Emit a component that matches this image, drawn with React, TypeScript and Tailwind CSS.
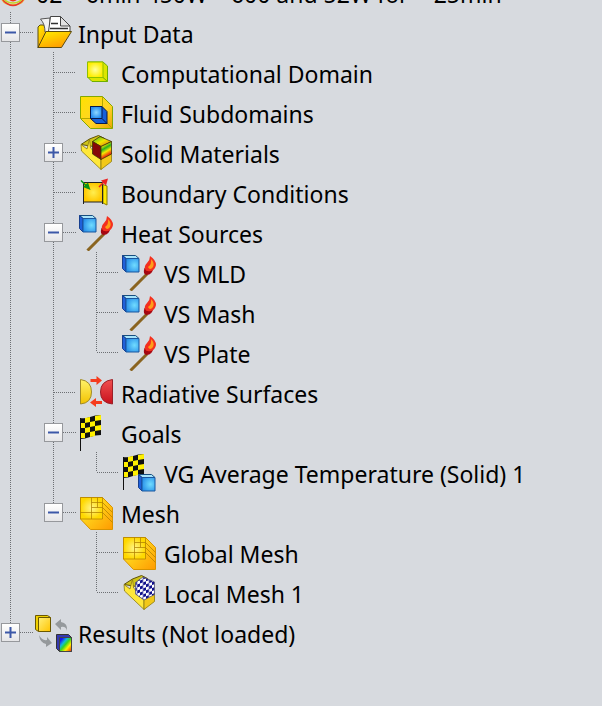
import { useState, type ReactNode } from "react";

type TreeNode = {
  id: string;
  label: string;
  icon: ReactNode;
  children?: TreeNode[];
  collapsed?: boolean;
};

function ProjectIcon() {
  return (
    <svg viewBox="4 0 36 40" className="h-10 w-9 shrink-0" aria-hidden="true">
      <path d="M4 20Q5 33 17 33T30 20" fill="none" stroke="#f0a02c" strokeWidth="1.5" />
      <path d="M7 28Q12 33.5 17 33.5T27 28" fill="none" stroke="#e8352c" strokeWidth="1.5" />
      <path d="M5 23Q9 31 17 31T29 23" fill="none" stroke="#c4d52b" strokeWidth="1.5" />
      <circle cx="17" cy="24" r="5.5" fill="#ef3a1c" />
    </svg>
  );
}

function FolderIcon() {
  return (
    <svg viewBox="0 0 36 36" className="size-9" aria-hidden="true">
      <defs>
        <linearGradient id="folder" x1="0" y1="0" x2="0.6" y2="1">
          <stop offset="0" stopColor="#fff200" />
          <stop offset="1" stopColor="#ff9d00" />
        </linearGradient>
      </defs>
      <path d="M2 33V12l2-2h4l3 4v8" fill="url(#folder)" stroke="#5b4a10" />
      <path d="M4.5 4L14 3v14H9q0-8-4.5-13z" fill="#f2f2f2" stroke="#555" />
      <path d="M14.5 1.5h10L34 11v5.5H12.5z" fill="#fff" stroke="#444" />
      <path d="M24.5 1.5V11H34z" fill="#e2e2e2" stroke="#444" />
      <path d="M15 8.5h7M14 13.5h18" stroke="#333" strokeWidth="1.5" />
      <path d="M2 32.5l8-16h25.5l-10 16z" fill="url(#folder)" stroke="#5b4a10" />
    </svg>
  );
}

function DomainIcon() {
  return (
    <svg viewBox="0 0 36 36" className="size-9" aria-hidden="true">
      <defs>
        <radialGradient id="domain">
          <stop offset="0" stopColor="#ffffa0" />
          <stop offset="1" stopColor="#ffee00" />
        </radialGradient>
      </defs>
      <path d="M8.5 7H24l4.5 4v15.5H13L8.5 22z" fill="#dce600" stroke="#6fae00" />
      <path d="M8.5 7H24v15.5H8.5z" fill="url(#domain)" stroke="#8fc000" />
      <path d="M24 22.5l4.5 4" stroke="#6fae00" />
    </svg>
  );
}

function SubdomainIcon() {
  return (
    <svg viewBox="0 0 36 36" className="size-9" aria-hidden="true">
      <defs>
        <linearGradient id="sub" x1="0" y1="0" x2="1" y2="1">
          <stop offset="0" stopColor="#ffe100" />
          <stop offset="0.6" stopColor="#ffd428" />
          <stop offset="1" stopColor="#eba400" />
        </linearGradient>
        <radialGradient id="subBlue">
          <stop offset="0" stopColor="#8fd8ff" />
          <stop offset="1" stopColor="#278ef0" />
        </radialGradient>
      </defs>
      <path d="M1.5 1.5h22l10 10v22h-22l-10-10z" fill="url(#sub)" stroke="#84a800" />
      <path d="M1.5 23.5h10M23.5 1.5v10M28 28l5.5 5.5" fill="none" stroke="#b4a800" />
      <path d="M11.5 11.5H23l5 5v12H17l-5.5-5z" fill="#1660d8" stroke="#09194a" />
      <path d="M11.5 11.5H23v12H11.5z" fill="url(#subBlue)" stroke="#09194a" />
      <path d="M23 23.5l5 5" stroke="#09194a" />
    </svg>
  );
}

// Slotted block shared by the solid material and local mesh icons
function Bracket() {
  return (
    <>
      <path d="M2 9.5L10.5 4l9-3.5 6 3-11 8z" fill="#cfc418" stroke="#5e5208" />
      <path d="M2 9.5l6 4.5 2.5-10 1 9L22 23v11.5L2.5 16z" fill="#ffe83a" stroke="#8a7a10" strokeWidth="0.8" />
      <path d="M22 23l10.5-5v8.500L22 34.5z" fill="#f2c818" stroke="#8a7a10" strokeWidth="0.8" />
    </>
  );
}

function SolidIcon() {
  return (
    <svg viewBox="0 0 36 36" className="size-9" aria-hidden="true">
      <defs>
        <linearGradient id="heatSide" x1="0" y1="0" x2="0.35" y2="1">
          <stop offset="0" stopColor="#e83010" />
          <stop offset="0.25" stopColor="#f6e800" />
          <stop offset="0.45" stopColor="#28b020" />
          <stop offset="0.65" stopColor="#f6e800" />
          <stop offset="0.85" stopColor="#f04010" />
          <stop offset="1" stopColor="#c01808" />
        </linearGradient>
        <linearGradient id="heatTop" x1="0" y1="0" x2="1" y2="1">
          <stop offset="0" stopColor="#28b020" />
          <stop offset="0.5" stopColor="#f0e800" />
          <stop offset="1" stopColor="#e85010" />
        </linearGradient>
      </defs>
      <Bracket />
      <path d="M13.5 6.5l7.5-5 11.5 5-10.5 5z" fill="url(#heatTop)" stroke="#403505" strokeWidth="0.8" />
      <path d="M13.5 6.5l8.5 5v13L13.5 19z" fill="#860808" stroke="#403505" strokeWidth="0.8" />
      <path d="M22 11.5l10.5-5V19L22 24.5z" fill="url(#heatSide)" stroke="#403505" strokeWidth="0.8" />
    </svg>
  );
}

function BoundaryIcon() {
  return (
    <svg viewBox="0 0 36 36" className="size-9" aria-hidden="true">
      <defs>
        <radialGradient id="boundary">
          <stop offset="0" stopColor="#ffee50" />
          <stop offset="1" stopColor="#ffc800" />
        </radialGradient>
      </defs>
      <path d="M24 9.5l4 1.5v19l-4-2z" fill="#ffe900" stroke="#8b7d00" />
      <path d="M5 8h18.5v19H5z" fill="url(#boundary)" />
      <path d="M4.5 29V7.5h19V29M4.5 27h19" fill="none" stroke="#222" />
      <path d="M2 5.5l6 6" stroke="#079416" strokeWidth="1.5" />
      <path d="M11.5 15L4 12l5-4.5z" fill="#079416" />
      <path d="M20 12l5-5" stroke="#ed2020" strokeWidth="1.5" />
      <path d="M29 3.500l-2 7-5-5z" fill="#ed2020" />
    </svg>
  );
}

function BlueCube() {
  return (
    <>
      <path d="M0.5 0.5h13l3.5 3H4z" fill="#a8e4fa" stroke="#174e7f" />
      <path d="M0.5 0.5v13L4 17V3.5z" fill="#1f60da" stroke="#173f8f" />
      <path d="M4 3.5h13V17H4z" fill="url(#cube)" stroke="#1a579f" />
    </>
  );
}

function CubeGradient() {
  return (
    <defs>
      <radialGradient id="cube" cx="0.65" cy="0.5" r="0.7">
        <stop offset="0" stopColor="#70dcff" />
        <stop offset="1" stopColor="#268de8" />
      </radialGradient>
    </defs>
  );
}

function HeatIcon() {
  return (
    <svg viewBox="0 0 36 36" className="size-9" aria-hidden="true">
      <CubeGradient />
      <BlueCube />
      <path d="M25 19L8.500 35.500" stroke="#8a6420" strokeWidth="3" />
      <path d="M22.500 13q-2 6 2 7 6 0 7-8z" fill="#a50712" />
      <path d="M23 14q-1-3 2-6t3-7q6 4 6 9-1 5-5 6-5 1-6-2z" fill="#f4301f" />
      <path d="M26 12q4-3 3-8 4 4 2 8-3 4-5 0z" fill="#ff9d18" />
    </svg>
  );
}

function RadiativeIcon() {
  return (
    <svg viewBox="0 0 36 36" className="size-9" aria-hidden="true">
      <defs>
        <linearGradient id="warm" x1="0" y1="0" x2="0" y2="1">
          <stop offset="0" stopColor="#fff36a" />
          <stop offset="1" stopColor="#f2c200" />
        </linearGradient>
        <linearGradient id="hot" x1="0" y1="0" x2="0" y2="1">
          <stop offset="0" stopColor="#f05050" />
          <stop offset="1" stopColor="#c8101c" />
        </linearGradient>
      </defs>
      <path d="M1.5 4.5Q12.5 6 12.5 17T1.5 29z" fill="url(#warm)" stroke="#a08a28" />
      <path d="M33.5 4.5Q21.5 6 21.5 17t12 12z" fill="url(#hot)" stroke="#9b2028" />
      <path d="M11.5 4h6V1L23 5.5 17.5 10V7h-6zM23 26h-6v-3l-6 4.5 6 4.5v-3h6z" fill="#f53b1d" />
    </svg>
  );
}

function Flag() {
  return (
    <>
      <path d="M1 3q5 1 10-1t11-2v20q-6 0-11 2T1 24z" fill="#111" />
      <path
        d="M6 3l5-1v5l-5 1zM16 1l6-1v5l-6 1zM1 8h5v5H1zM11 7l5-1v5l-5 1zM6 13l5-1v5l-5 1zM16 11l6-1v5l-6 1zM1 18h5v5H1zM11 17l5-1v5l-5 1z"
        fill="#fff000"
      />
      <path d="M1.5 3v33" stroke="#111" />
    </>
  );
}

function GoalsIcon() {
  return (
    <svg viewBox="0 0 36 36" className="size-9" aria-hidden="true">
      <Flag />
    </svg>
  );
}

function GoalIcon() {
  return (
    <svg viewBox="0 0 36 38" className="h-[38px] w-9" aria-hidden="true">
      <CubeGradient />
      <Flag />
      <g transform="translate(16 20)">
        <BlueCube />
      </g>
    </svg>
  );
}

function MeshIcon() {
  return (
    <svg viewBox="0 0 36 36" className="size-9" aria-hidden="true">
      <defs>
        <radialGradient id="meshFront">
          <stop offset="0" stopColor="#fff58a" />
          <stop offset="1" stopColor="#ffd800" />
        </radialGradient>
        <linearGradient id="meshSide" x1="0" y1="0" x2="1" y2="1">
          <stop offset="0.3" stopColor="#ffdc20" />
          <stop offset="1" stopColor="#ff9a00" />
        </linearGradient>
      </defs>
      <path d="M1.5 2.5h22l10 10v22h-22L1.5 24z" fill="url(#meshSide)" stroke="#d89400" />
      <path d="M1.5 2.5h22V24h-22z" fill="url(#meshFront)" />
      <path
        d="M1.5 2.5h22V24h-22zM12.5 2.5V24M1.5 17.5h22M12.5 7.5h11M12.5 12.5h11M18.5 2.5v10M23.5 7.5l10 10M23.5 12.5l10 10M23.5 17.5l10 10"
        fill="none"
        stroke="#b08000"
        strokeOpacity="0.75"
      />
    </svg>
  );
}

function LocalMeshIcon() {
  return (
    <svg viewBox="0 0 36 36" className="size-9" aria-hidden="true">
      <defs>
        <pattern id="checks" width="6" height="6" patternUnits="userSpaceOnUse" patternTransform="skewY(-20)">
          <path d="M0 0h6v6H0z" fill="#fff" />
          <path d="M0 0h3v3H0zM3 3h3v3H3z" fill="#10108c" />
        </pattern>
      </defs>
      <Bracket />
      <path d="M13.5 7.5L21 2l11.5 5v12.5L22 25l-8.5-6z" fill="url(#checks)" stroke="#555577" strokeWidth="0.8" />
    </svg>
  );
}

function ResultsIcon() {
  return (
    <svg viewBox="0 0 40 40" className="-mx-0.5 size-10 shrink-0" aria-hidden="true">
      <defs>
        <linearGradient id="box" x1="0" y1="0" x2="1" y2="1">
          <stop offset="0" stopColor="#fff07a" />
          <stop offset="1" stopColor="#ffc400" />
        </linearGradient>
        <linearGradient id="rainbow" x1="0" y1="0" x2="1" y2="1">
          <stop offset="0.15" stopColor="#1616f0" />
          <stop offset="0.35" stopColor="#12b8dd" />
          <stop offset="0.5" stopColor="#35d522" />
          <stop offset="0.7" stopColor="#fff000" />
          <stop offset="1" stopColor="#f02010" />
        </linearGradient>
      </defs>
      <path d="M1.5 2.5h12l3 2v14h-12l-3-2z" fill="#f0d000" stroke="#6b5800" />
      <path d="M4.5 4.5h12v14h-12z" fill="url(#box)" stroke="#6b5800" />
      <path d="M21 11l6-5v3q7 1 6 9-1-5-6-4v3z" fill="#95999c" />
      <path d="M5 22q3 6 8 5v-3l5 6-6 4v-3q-6-1-7-9z" fill="#95999c" />
      <path d="M22.5 21.5h12l3 3v14h-12l-3-3z" fill="#3438b0" stroke="#333" />
      <path d="M25.5 24.5h12v14h-12z" fill="url(#rainbow)" stroke="#444" />
    </svg>
  );
}

const tree: TreeNode[] = [
  {
    id: "input",
    label: "Input Data",
    icon: <FolderIcon />,
    children: [
      { id: "domain", label: "Computational Domain", icon: <DomainIcon /> },
      { id: "fluid", label: "Fluid Subdomains", icon: <SubdomainIcon /> },
      { id: "solid", label: "Solid Materials", icon: <SolidIcon />, children: [], collapsed: true },
      { id: "boundary", label: "Boundary Conditions", icon: <BoundaryIcon /> },
      {
        id: "heat",
        label: "Heat Sources",
        icon: <HeatIcon />,
        children: [
          { id: "mld", label: "VS MLD", icon: <HeatIcon /> },
          { id: "mash", label: "VS Mash", icon: <HeatIcon /> },
          { id: "plate", label: "VS Plate", icon: <HeatIcon /> },
        ],
      },
      { id: "radiative", label: "Radiative Surfaces", icon: <RadiativeIcon /> },
      {
        id: "goals",
        label: "Goals",
        icon: <GoalsIcon />,
        children: [{ id: "vg", label: "VG Average Temperature (Solid) 1", icon: <GoalIcon /> }],
      },
      {
        id: "mesh",
        label: "Mesh",
        icon: <MeshIcon />,
        children: [
          { id: "global", label: "Global Mesh", icon: <MeshIcon /> },
          { id: "local", label: "Local Mesh 1", icon: <LocalMeshIcon /> },
        ],
      },
    ],
  },
  { id: "results", label: "Results (Not loaded)", icon: <ResultsIcon />, children: [], collapsed: true },
];

const dotsDown = "w-px bg-[repeating-linear-gradient(to_bottom,#6c6f73_0_1px,transparent_1px_2px)]";
const dotsAcross = "h-px bg-[repeating-linear-gradient(to_right,#6c6f73_0_1px,transparent_1px_2px)]";

function TreeItem({ node, guides, last }: { node: TreeNode; guides: boolean[]; last: boolean }) {
  const [open, setOpen] = useState(!node.collapsed);

  return (
    <li>
      <div className="flex h-10 items-center">
        {guides.map((show, i) => (
          <span key={i} className="flex h-full w-[43px] shrink-0 pl-2.5">
            {show && <span className={dotsDown} />}
          </span>
        ))}
        <span className="flex h-full w-[33px] shrink-0 items-center">
          <span className={`flex h-full flex-col items-center ${node.children ? "ml-px w-[19px]" : "ml-2.5 w-px"}`}>
            <span className={`flex-1 ${dotsDown}`} />
            {node.children && (
              <button
                type="button"
                aria-label={`${open ? "Collapse" : "Expand"} ${node.label}`}
                aria-expanded={open}
                onClick={() => setOpen(!open)}
                className="flex size-[19px] shrink-0 items-center justify-center border border-[#96989c] bg-linear-to-b from-white to-[#e6e6e8]"
              >
                <svg viewBox="0 0 11 11" className="size-[11px]" aria-hidden="true">
                  <path d={open ? "M0 5.5h11" : "M0 5.5h11M5.5 0v11"} stroke="#3c58a8" strokeWidth="2" />
                </svg>
              </button>
            )}
            <span className={`flex-1 ${last ? "" : dotsDown}`} />
          </span>
          <span className={`flex-1 ${dotsAcross}`} />
        </span>
        <span className="ml-[3px] flex w-9 shrink-0 justify-center pt-0.5">{node.icon}</span>
        <span className="ml-1.5 pt-[3px] whitespace-nowrap">{node.label}</span>
      </div>
      {open && node.children && node.children.length > 0 && (
        <ul>
          {node.children.map((child, i) => (
            <TreeItem key={child.id} node={child} guides={[...guides, !last]} last={i === node.children!.length - 1} />
          ))}
        </ul>
      )}
    </li>
  );
}

export default function App() {
  return (
    <main className="min-h-screen overflow-hidden bg-[#d7dadf] font-['Noto_Sans',sans-serif] text-[23px] leading-10 text-black">
      <header className="flex h-3 items-end overflow-hidden">
        <ProjectIcon />
        <h1 className="h-10 shrink-0 pt-0.5 whitespace-nowrap">02 – 6min 450W – 600 and 52W for + 25min</h1>
      </header>
      <ul>
        {tree.map((node, i) => (
          <TreeItem key={node.id} node={node} guides={[]} last={i === tree.length - 1} />
        ))}
      </ul>
    </main>
  );
}
